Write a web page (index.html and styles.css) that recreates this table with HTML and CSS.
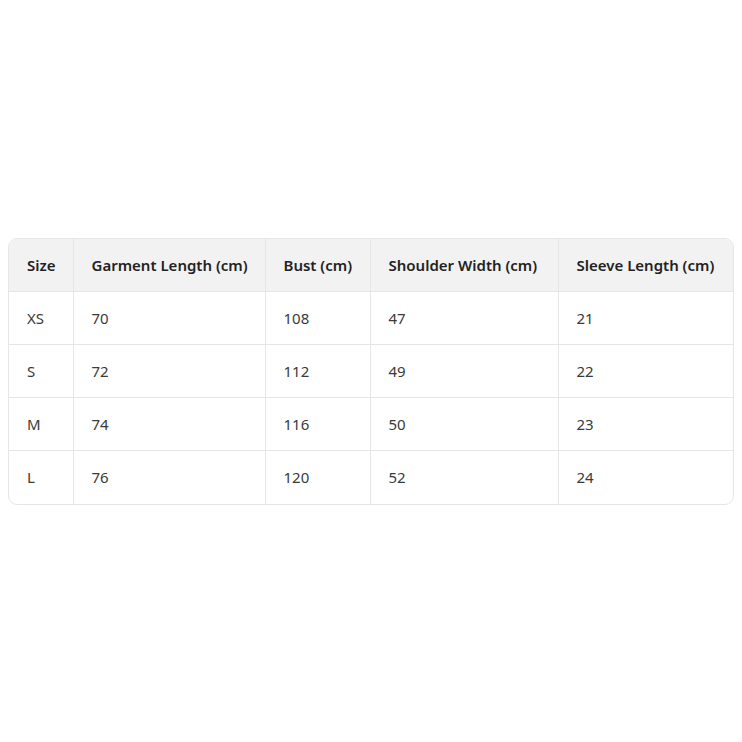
FILE: index.html
```html
<!DOCTYPE html>
<html lang="en">
<head>
<meta charset="utf-8">
<title>Size Chart</title>
<link rel="stylesheet" href="styles.css">
</head>
<body>
<main class="page">
  <div class="table-wrap">
    <table class="size-table">
      <colgroup>
        <col class="c-size">
        <col class="c-length">
        <col class="c-bust">
        <col class="c-shoulder">
        <col class="c-sleeve">
      </colgroup>
      <thead>
        <tr>
          <th>Size</th>
          <th>Garment Length (cm)</th>
          <th>Bust (cm)</th>
          <th>Shoulder Width (cm)</th>
          <th>Sleeve Length (cm)</th>
        </tr>
      </thead>
      <tbody>
        <tr><td>XS</td><td>70</td><td>108</td><td>47</td><td>21</td></tr>
        <tr><td>S</td><td>72</td><td>112</td><td>49</td><td>22</td></tr>
        <tr><td>M</td><td>74</td><td>116</td><td>50</td><td>23</td></tr>
        <tr><td>L</td><td>76</td><td>120</td><td>52</td><td>24</td></tr>
      </tbody>
    </table>
  </div>
</main>
</body>
</html>
```

FILE: styles.css
```css
html, body {
  margin: 0;
  padding: 0;
  background: #ffffff;
}

.page {
  min-height: 742px;
  display: flex;
  align-items: center;
  padding: 0 8px;
  box-sizing: border-box;
  font-family: "Noto Sans", "Open Sans", sans-serif;
}

.table-wrap {
  width: 100%;
  border: 1px solid #e6e6e6;
  border-radius: 9px;
  overflow: hidden;
}

.size-table {
  width: 100%;
  border-collapse: collapse;
  table-layout: fixed;
  font-size: 15px;
  color: #333333;
}

.c-size { width: 64px; }
.c-length { width: 192px; }
.c-bust { width: 105px; }
.c-shoulder { width: 188px; }
.c-sleeve { width: auto; }

.size-table th,
.size-table td {
  height: 53px;
  padding: 0 0 0 18px;
  text-align: left;
  box-sizing: border-box;
  border-left: 1px solid #e6e6e6;
  border-top: 1px solid #e6e6e6;
  white-space: nowrap;
}

.size-table th:first-child,
.size-table td:first-child {
  border-left: none;
}

.size-table thead th {
  border-top: none;
  background: #f2f2f2;
  font-weight: 600;
  color: #222222;
}

.size-table td {
  font-weight: 400;
  color: #3a3a3a;
}
```
